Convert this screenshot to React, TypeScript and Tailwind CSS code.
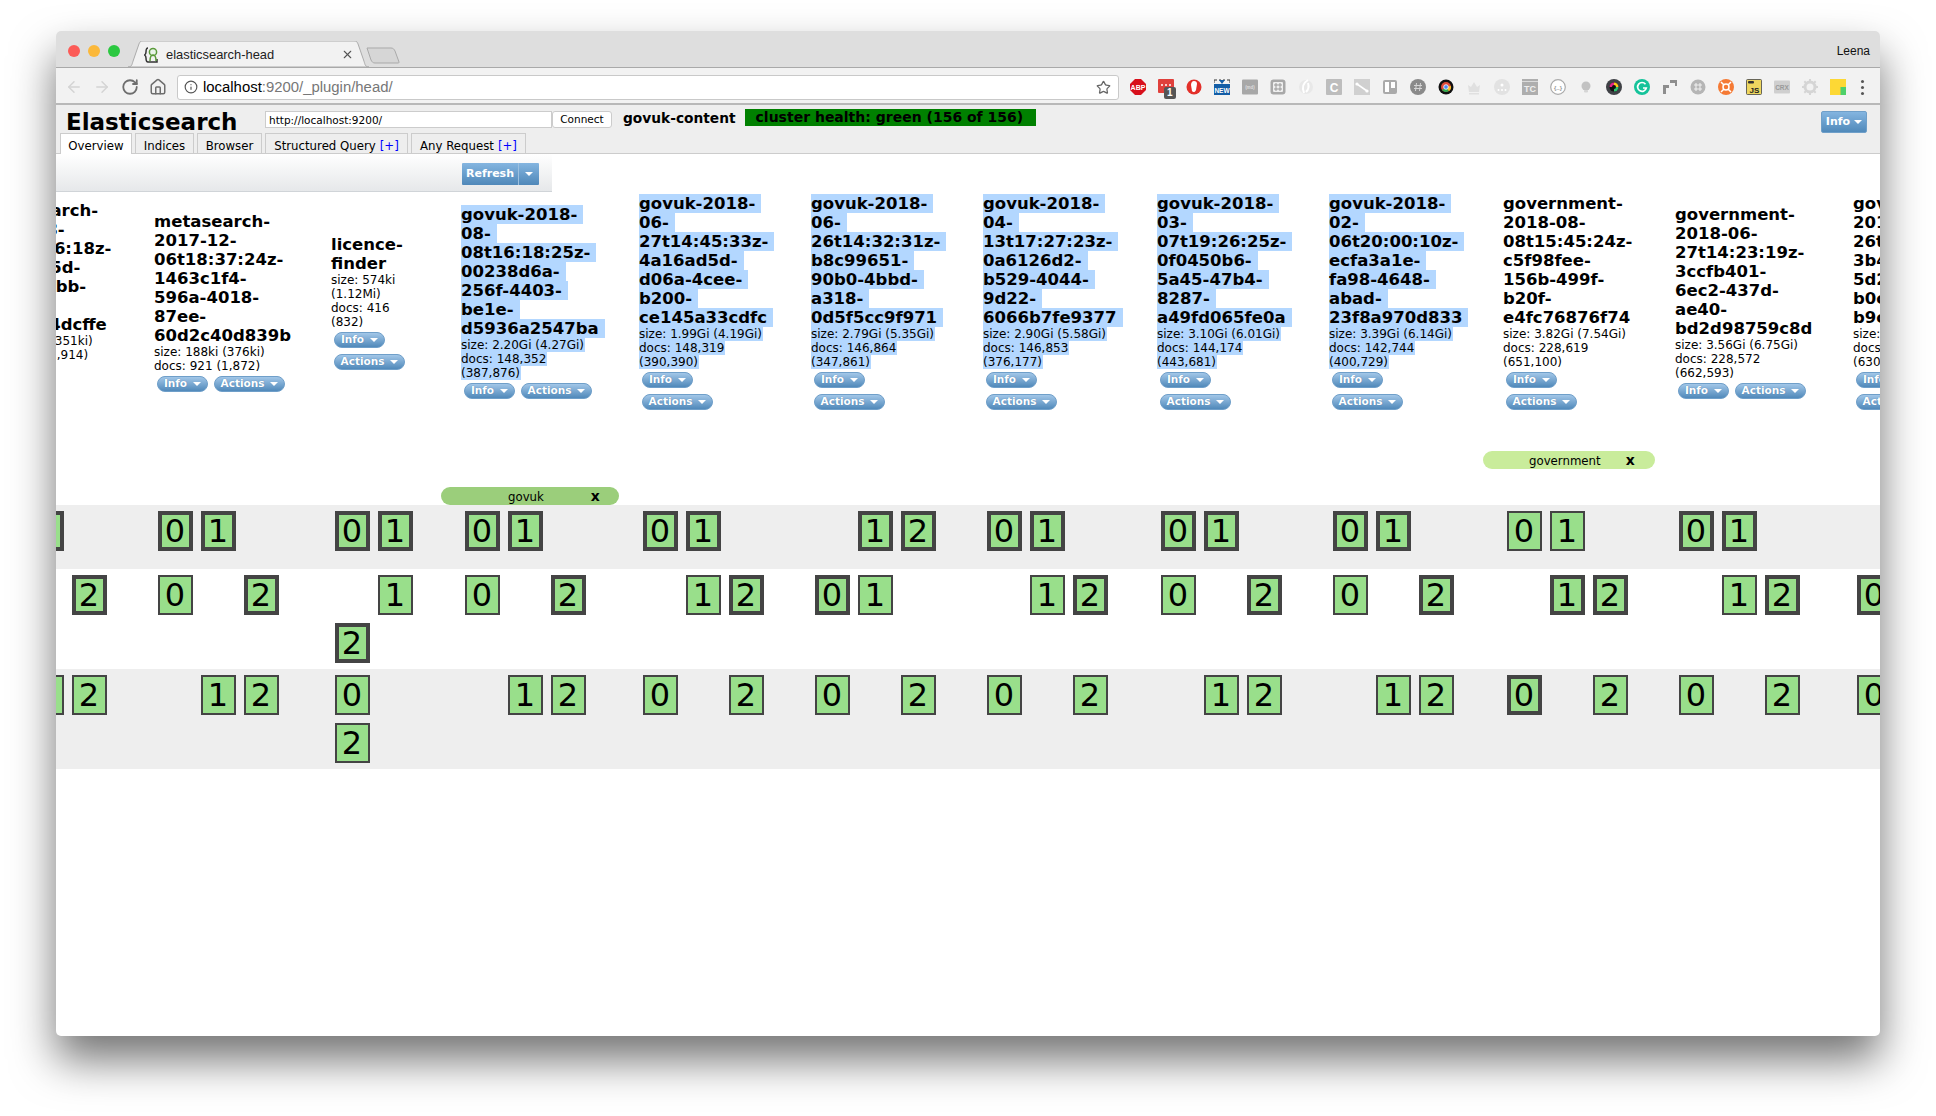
import React from 'react';
import { ArrowLeft, ArrowRight, RotateCw, House, Star, Info, X } from 'lucide-react';

type Col = {
    w: string;
    shardW: string;
    lines: string[];
    stats: string[];
    selected?: boolean;
    stacked?: boolean;
    shards: [string, string, string];
};

// T = primary (thick border), t = replica, - = empty slot
const columns: Col[] = [
    {
        w: 'w-[172px]', shardW: 'w-[125px]', stacked: true,
        lines: ['metasearch-', '2018-08-', '08t16:16:18z-', '4e19a75d-', '7c2a-90bb-', '8f1e-', '7ab1c34dcffe'],
        stats: ['size: 175ki (351ki)', 'docs: 957 (1,914)'],
        shards: ['-T-', '--T', '-tt'],
    },
    {
        w: 'w-[177px]', shardW: 'w-[125px]',
        lines: ['metasearch-', '2017-12-', '06t18:37:24z-', '1463c1f4-', '596a-4018-', '87ee-', '60d2c40d839b'],
        stats: ['size: 188ki (376ki)', 'docs: 921 (1,872)'],
        shards: ['TT-', 't-T', '-tt'],
    },
    {
        w: 'w-[130px]', shardW: 'w-[90px]', stacked: true,
        lines: ['licence-', 'finder'],
        stats: ['size: 574ki', '(1.12Mi)', 'docs: 416', '(832)'],
        shards: ['TT-', '-tT', 't-t'],
    },
    {
        w: 'w-[178px]', shardW: 'w-[125px]', selected: true,
        lines: ['govuk-2018-', '08-', '08t16:18:25z-', '00238d6a-', '256f-4403-', 'be1e-', 'd5936a2547ba'],
        stats: ['size: 2.20Gi (4.27Gi)', 'docs: 148,352', '(387,876)'],
        shards: ['TT-', 't-T', '-tt'],
    },
    {
        w: 'w-[172px]', shardW: 'w-[125px]', selected: true, stacked: true,
        lines: ['govuk-2018-', '06-', '27t14:45:33z-', '4a16ad5d-', 'd06a-4cee-', 'b200-', 'ce145a33cdfc'],
        stats: ['size: 1.99Gi (4.19Gi)', 'docs: 148,319', '(390,390)'],
        shards: ['TT-', '-tT', 't-t'],
    },
    {
        w: 'w-[172px]', shardW: 'w-[125px]', selected: true, stacked: true,
        lines: ['govuk-2018-', '06-', '26t14:32:31z-', 'b8c99651-', '90b0-4bbd-', 'a318-', '0d5f5cc9f971'],
        stats: ['size: 2.79Gi (5.35Gi)', 'docs: 146,864', '(347,861)'],
        shards: ['-TT', 'Tt-', 't-t'],
    },
    {
        w: 'w-[174px]', shardW: 'w-[125px]', selected: true, stacked: true,
        lines: ['govuk-2018-', '04-', '13t17:27:23z-', '0a6126d2-', 'b529-4044-', '9d22-', '6066b7fe9377'],
        stats: ['size: 2.90Gi (5.58Gi)', 'docs: 146,853', '(376,177)'],
        shards: ['TT-', '-tT', 't-t'],
    },
    {
        w: 'w-[172px]', shardW: 'w-[125px]', selected: true, stacked: true,
        lines: ['govuk-2018-', '03-', '07t19:26:25z-', '0f0450b6-', '5a45-47b4-', '8287-', 'a49fd065fe0a'],
        stats: ['size: 3.10Gi (6.01Gi)', 'docs: 144,174', '(443,681)'],
        shards: ['TT-', 't-T', '-tt'],
    },
    {
        w: 'w-[174px]', shardW: 'w-[125px]', selected: true, stacked: true,
        lines: ['govuk-2018-', '02-', '06t20:00:10z-', 'ecfa3a1e-', 'fa98-4648-', 'abad-', '23f8a970d833'],
        stats: ['size: 3.39Gi (6.14Gi)', 'docs: 142,744', '(400,729)'],
        shards: ['TT-', 't-T', '-tt'],
    },
    {
        w: 'w-[172px]', shardW: 'w-[125px]', stacked: true,
        lines: ['government-', '2018-08-', '08t15:45:24z-', 'c5f98fee-', '156b-499f-', 'b20f-', 'e4fc76876f74'],
        stats: ['size: 3.82Gi (7.54Gi)', 'docs: 228,619', '(651,100)'],
        shards: ['tt-', '-TT', 'T-t'],
    },
    {
        w: 'w-[178px]', shardW: 'w-[125px]',
        lines: ['government-', '2018-06-', '27t14:23:19z-', '3ccfb401-', '6ec2-437d-', 'ae40-', 'bd2d98759c8d'],
        stats: ['size: 3.56Gi (6.75Gi)', 'docs: 228,572', '(662,593)'],
        shards: ['TT-', '-tT', 't-t'],
    },
    {
        w: 'w-[172px]', shardW: 'w-[125px]', stacked: true,
        lines: ['government-', '2018-06-', '26t14:10:05z-', '3b4a19c2-', '5d2e-41f7-', 'b0c3-', 'b9c71ad4e602'],
        stats: ['size: 3.60Gi (7.02Gi)', 'docs: 228,101', '(630,512)'],
        shards: ['-TT', 'T--', 't--'],
    },
];

function Caret() {
    return <span className="inline-block h-0 w-0 border-x-[4px] border-t-[4px] border-x-transparent border-t-white" />;
}

function PillButton({ label, width }: { label: string; width: string }) {
    return (
        <div className={`flex h-[16px] items-center justify-center gap-[6px] rounded-full border border-[#6f9fc9] bg-gradient-to-b from-[#a2c7e8] to-[#5089ba] text-[10.5px] font-bold text-white [text-shadow:0_0_1px_#3f75a5] ${width}`}>
            {label}
            <Caret />
        </div>
    );
}

function IndexHeader({ col }: { col: Col }) {
    const mark = col.selected ? 'bg-[#b3d7ff] pr-[6px]' : '';
    return (
        <div className="flex flex-col">
            <div className="text-[16.5px] leading-[19px] font-bold whitespace-nowrap text-black">
                {col.lines.map((line) => (
                    <div key={line}><span className={mark}>{line}</span></div>
                ))}
            </div>
            <div className="text-[12px] leading-[14px] whitespace-nowrap text-black">
                {col.stats.map((line) => (
                    <div key={line}><span className={col.selected ? 'bg-[#b3d7ff] pr-[1px]' : ''}>{line}</span></div>
                ))}
            </div>
            <div className={col.stacked ? 'mt-[3px] ml-[3px] flex flex-col gap-[6px]' : 'mt-[3px] ml-[3px] flex gap-[6px]'}>
                <PillButton label="Info" width="w-[51px]" />
                <PillButton label="Actions" width="w-[71px]" />
            </div>
        </div>
    );
}

function Shard({ n, kind }: { n: number; kind: string }) {
    if (kind === '-') return <div className="h-[40px] w-[35px]" />;
    return (
        <div className={`flex h-[40px] w-[35px] items-center justify-center border-[#444] bg-[#99df8b] pr-[1px] text-[32px] leading-none text-black ${kind === 'T' ? 'border-[4px]' : 'border-2'}`}>
            {n}
        </div>
    );
}

function ExtIcon({ children }: { children: React.ReactNode }) {
    return (
        <svg viewBox="0 0 16 16" className="h-[16px] w-[16px]">
            {children}
        </svg>
    );
}

const iconText = 'font-["Liberation_Sans"] font-bold';

const extensions: React.ReactNode[] = [
    <><path d="M5 0h6l5 5v6l-5 5H5l-5-5V5z" fill="#d8101c" /><text x="8" y="10.5" textAnchor="middle" fontSize="7" fill="#fff" className={iconText}>ABP</text></>,
    <><rect width="16" height="14" rx="1" fill="#e0403c" /><circle cx="4" cy="6" r="1" fill="#fff" /><circle cx="8" cy="6" r="1" fill="#fff" /><circle cx="12" cy="6" r="1" fill="#fff" /></>,
    <><circle cx="8" cy="8" r="7.5" fill="#e3302a" /><path d="M5 6c0-2 1-4 3-4s3 1 3 3l-1 6c-.5 2-3 3-4 1z" fill="#fff" /></>,
    <><rect y="5" width="16" height="11" fill="#135da6" /><path d="M0 1h3M5 1h2M9 1h2M13 1h3M0 1v3M16 1v3" stroke="#333" strokeWidth="1" /><path d="M5 1l3 4 3-4z" fill="#135da6" /><text x="8" y="14" textAnchor="middle" fontSize="6.5" fill="#fff" className={iconText}>NEW</text></>,
    <><rect width="16" height="15" y="0.5" rx="1" fill="#a8a8a8" /><text x="8" y="10" textAnchor="middle" fontSize="4.5" fill="#ddd" className={iconText}>(md)</text></>,
    <><rect width="15" height="15" x="0.5" y="0.5" rx="3" fill="#a8a8a8" /><rect x="3" y="3" width="10" height="10" rx="1" fill="#eee" /><path d="M6 4v8M10 4v8M4 6h8M4 10h8" stroke="#999" strokeWidth="1" /></>,
    <><circle cx="8" cy="8" r="7" fill="#e8e8e8" /><path d="M10 1c-5 3-6 8-4 13M10 4c1 3 1 6-2 9" stroke="#fff" strokeWidth="2" fill="none" /></>,
    <><rect width="16" height="16" rx="1" fill="#bdbdbd" /><text x="8" y="12.5" textAnchor="middle" fontSize="12" fill="#fff" className={iconText}>C</text></>,
    <><rect width="16" height="16" fill="#d0d0d0" /><path d="M3 5l10 7" stroke="#fff" strokeWidth="1.6" /><circle cx="3" cy="5" r="1.6" fill="#fff" /><circle cx="13" cy="12" r="1.6" fill="#fff" /></>,
    <><rect x="1" y="1" width="14" height="14" rx="2" fill="#aaa" /><rect x="3" y="3" width="4" height="10" fill="#fff" /><rect x="9" y="3" width="4" height="6" fill="#fff" /></>,
    <><circle cx="8" cy="8" r="8" fill="#8a8a8a" /><path d="M6.5 4l-1 8M10.5 4l-1 8M4 6.5h8M4 9.5h8" stroke="#d5d5d5" strokeWidth="1" /></>,
    <><circle cx="8" cy="8" r="7.5" fill="#111" /><circle cx="8" cy="8" r="5" fill="#dd4b39" /><path d="M8 8l-4 3a5 5 0 0 0 7 1z" fill="#2da94f" /><path d="M8 8l5-1a5 5 0 0 1-2 5z" fill="#f6c026" /><circle cx="8" cy="8" r="2.3" fill="#4a8af4" stroke="#fff" strokeWidth="0.8" /></>,
    <path d="M2 6l3 2 3-5 3 5 3-2-1 7H3zM3 14h10v1.5H3z" fill="#e0e0e0" />,
    <><circle cx="8" cy="8" r="8" fill="#e2e2e2" /><circle cx="8" cy="6" r="1.5" fill="#fff" /><circle cx="4.5" cy="11" r="1" fill="#fff" /><circle cx="8" cy="11" r="1" fill="#fff" /><circle cx="11.5" cy="11" r="1" fill="#fff" /></>,
    <><rect width="16" height="16" fill="#aeaeae" /><path d="M0 2.5h16" stroke="#e6e6e6" strokeWidth="0.8" /><text x="8" y="13" textAnchor="middle" fontSize="9" fill="#eee" className={iconText}>TC</text></>,
    <><circle cx="8" cy="8" r="7.3" fill="#fff" stroke="#aaa" strokeWidth="1.2" /><text x="8" y="10.5" textAnchor="middle" fontSize="6" fill="#999" className={iconText}>{'{..}'}</text></>,
    <><circle cx="8" cy="7" r="4.5" fill="#c2c2c2" /><rect x="6" y="11" width="4" height="2.5" rx="1" fill="#d5d5d5" /></>,
    <><circle cx="8" cy="8" r="8" fill="#3f4146" /><circle cx="8" cy="8" r="4.5" fill="#111" /><path d="M8 3.5a4.5 4.5 0 0 1 4.5 4.5H8z" fill="#ffc61a" /><path d="M3.5 8A4.5 4.5 0 0 1 8 3.5V8z" fill="#e0248a" /><path d="M12.5 8A4.5 4.5 0 0 1 8 12.5V8z" fill="#29c46e" /><circle cx="8" cy="8" r="2" fill="#111" /></>,
    <><circle cx="8" cy="8" r="8" fill="#15c39a" /><path d="M11.5 5.2A4.4 4.4 0 1 0 12.3 9H9" stroke="#fff" strokeWidth="1.7" fill="none" /></>,
    <path d="M8 1h7v6h-2V4H8zM1 6h6v3H4v6H1z" fill="#8e8e8e" />,
    <><circle cx="8" cy="8" r="7.5" fill="#b5b5b5" /><path d="M6 4v8M10 4v8M4 6h8M4 10h8" stroke="#eee" strokeWidth="1.1" /></>,
    <><circle cx="8" cy="8" r="8" fill="#f57a34" /><circle cx="8" cy="8" r="3" fill="none" stroke="#fff" strokeWidth="1.5" /><path d="M3 3l3 3M13 3l-3 3M3 13l3-3M13 13l-3-3" stroke="#fff" strokeWidth="1.5" /></>,
    <><rect x="0.5" y="0.5" width="15" height="15" rx="1" fill="#eed75f" stroke="#444" strokeWidth="0.8" /><rect x="2" y="2" width="6" height="2.5" rx="1" fill="#333" /><text x="8.5" y="14" textAnchor="middle" fontSize="8" fill="#222" className={iconText}>JS</text></>,
    <><rect width="16" height="13" y="1.5" rx="1" fill="#cfcfcf" /><text x="8" y="11" textAnchor="middle" fontSize="6.5" fill="#9a9a9a" className={iconText}>CRX</text></>,
    <><circle cx="8" cy="8" r="5" fill="none" stroke="#d5d5d5" strokeWidth="3" /><path d="M8 0v3M8 13v3M0 8h3M13 8h3M2.3 2.3l2 2M11.7 11.7l2 2M2.3 13.7l2-2M11.7 4.3l2-2" stroke="#d5d5d5" strokeWidth="2" /></>,
    <><rect width="16" height="16" fill="#fdd835" /><rect x="10.5" y="8" width="5.5" height="8" fill="#4ed06a" /></>,
];

export default function App() {
    return (
        <div className="h-[1116px] w-[1936px] overflow-hidden bg-white pt-[31px] pl-[56px] font-['DejaVu_Sans',sans-serif]">
            <div className="flex h-[1005px] w-[1824px] flex-col overflow-hidden rounded-[5px] bg-white shadow-[0_24px_44px_rgba(0,0,0,0.55)]">
                {/* Tab strip */}
                <div className="flex h-[37px] items-end border-b border-[#a9a9a9] bg-[#dedede] font-['Liberation_Sans',sans-serif]">
                    <div className="mb-[10px] ml-[12px] flex gap-[8px] self-end">
                        <span className="h-[12px] w-[12px] rounded-full bg-[#fc5b57]" />
                        <span className="h-[12px] w-[12px] rounded-full bg-[#fbb83a]" />
                        <span className="h-[12px] w-[12px] rounded-full bg-[#2bc840]" />
                    </div>
                    <div className="relative ml-[8px] flex h-[26px] w-[241px] items-center pt-[1px] pr-[15px] pl-[16px]">
                        <svg viewBox="0 0 241 27" preserveAspectRatio="none" className="absolute inset-0 h-[26px] w-[241px]">
                            <path d="M0 27 C4 27 4 24 5 21 L11 3 C12 1 12 0 15 0 L226 0 C229 0 229 1 230 3 L236 21 C237 24 237 27 241 27 Z" fill="#f2f2f2" stroke="#a9a9a9" />
                        </svg>
                        <svg viewBox="0 0 16 16" className="relative h-[16px] w-[16px]">
                            <path d="M4 1C2 1 2 3 2 5S2 7 .6 8C2 9 2 9 2 11s0 4 2 4h9v-3" fill="none" stroke="#333" strokeWidth="1.5" />
                            <circle cx="9" cy="5" r="3.6" fill="#e8f4e8" stroke="#5a9a3a" strokeWidth="1.5" />
                            <path d="M6 14c0-4 1-6 3-6s3 2 3 6" fill="none" stroke="#5a9a3a" strokeWidth="1.5" />
                        </svg>
                        <span className="relative ml-[6px] text-[12.9px] text-[#222]">elasticsearch-head</span>
                        <X className="relative ml-auto h-[13px] w-[13px] text-[#555]" strokeWidth={2} />
                    </div>
                    <svg viewBox="0 0 34 17" className="mb-[3px] -ml-[3px] h-[17px] w-[34px]">
                        <path d="M1 1h24c2 0 3 1 4 3l4 11c0 1 0 1-2 1H9c-2 0-3-1-4-3z" fill="#d6d6d6" stroke="#a9a9a9" />
                    </svg>
                    <span className="mb-[7px] ml-auto pr-[10px] text-[12px] text-[#111]">Leena</span>
                </div>

                {/* Toolbar */}
                <div className="flex h-[37px] items-center border-b-2 border-[#b8b8b8] bg-[#f2f2f2] pt-[3px] font-['Liberation_Sans',sans-serif]">
                    <div className="ml-[9px] flex items-center gap-[10px]">
                        <ArrowLeft className="h-[18px] w-[18px] text-[#d4d4d4]" strokeWidth={2} />
                        <ArrowRight className="h-[18px] w-[18px] text-[#d4d4d4]" strokeWidth={2} />
                        <RotateCw className="h-[18px] w-[18px] text-[#6e6e6e]" strokeWidth={2.4} />
                        <House className="h-[18px] w-[18px] text-[#6e6e6e]" strokeWidth={2} />
                    </div>
                    <div className="ml-[10px] flex h-[25px] w-[942px] items-center rounded-[3px] border border-[#c9c9c9] bg-white pr-[7px] pl-[6px]">
                        <Info className="h-[14px] w-[14px] text-[#555]" strokeWidth={2} />
                        <span className="ml-[5px] text-[14.9px] text-black">
                            localhost<span className="text-[#777]">:9200/_plugin/head/</span>
                        </span>
                        <Star className="ml-auto h-[15px] w-[15px] text-[#666]" strokeWidth={2} />
                    </div>
                    <div className="ml-[5px] flex items-center">
                        {extensions.map((icon, i) => (
                            <div key={i} className="relative flex w-[28px] justify-center">
                                <ExtIcon>{icon}</ExtIcon>
                                {i === 1 && (
                                    <span className="absolute top-[8px] left-[12px] rounded-[2px] bg-[#555] px-[3px] text-[10px] leading-[12px] font-bold text-white">1</span>
                                )}
                            </div>
                        ))}
                        <div className="flex w-[20px] flex-col items-center gap-[3px]">
                            <span className="h-[3px] w-[3px] rounded-full bg-[#555]" />
                            <span className="h-[3px] w-[3px] rounded-full bg-[#555]" />
                            <span className="h-[3px] w-[3px] rounded-full bg-[#555]" />
                        </div>
                    </div>
                </div>

                {/* elasticsearch-head header */}
                <div className="flex h-[49px] flex-col border-b border-[#ccc] bg-[#eee]">
                    <div className="flex h-[28px] items-start pr-[13px]">
                        <div className="mt-[3px] ml-[10px] w-[199px] text-[23px] leading-[28px] font-bold text-black">Elasticsearch</div>
                        <input
                            readOnly
                            value="http://localhost:9200/"
                            className="mt-[6px] h-[17px] w-[287px] border border-[#ccc] bg-white px-[3px] text-[10.5px] text-black outline-none"
                        />
                        <button className="mt-[6px] h-[17px] w-[60px] rounded-[3px] border border-[#ccc] bg-white text-[10.5px] leading-none text-black">Connect</button>
                        <span className="mt-[4px] ml-[11px] text-[13.75px] leading-[18px] font-bold text-black">govuk-content</span>
                        <span className="mt-[4px] ml-[9px] flex h-[17px] w-[291px] items-center bg-[#008000] pl-[11px] text-[14px] font-bold text-black">cluster health: green (156 of 156)</span>
                        <div className="mt-[6px] ml-auto flex h-[22px] w-[46px] items-center justify-center gap-[4px] rounded-[2px] border border-[#6f9fc9] bg-gradient-to-b from-[#84b5e0] to-[#5089ba] text-[11px] font-bold text-white">
                            Info
                            <Caret />
                        </div>
                    </div>
                    <div className="flex h-[20px] gap-[3px] pl-[4px] text-[11.75px] text-black">
                        <div className="-mb-px flex h-[21px] w-[72px] items-center justify-center border border-b-0 border-[#ccc] bg-white pt-[6px]">Overview</div>
                        <div className="flex w-[59px] items-center justify-center border border-b-0 border-[#ccc] pt-[6px]">Indices</div>
                        <div className="flex w-[65px] items-center justify-center border border-b-0 border-[#ccc] pt-[6px]">Browser</div>
                        <div className="flex w-[143px] items-center justify-center gap-[4px] border border-b-0 border-[#ccc] pt-[6px]">Structured Query <span className="text-[#00f]">[+]</span></div>
                        <div className="flex w-[115px] items-center justify-center gap-[4px] border border-b-0 border-[#ccc] pt-[6px]">Any Request <span className="text-[#00f]">[+]</span></div>
                    </div>
                </div>

                {/* Refresh bar */}
                <div className="flex h-[38px] w-[496px] items-start justify-end border-b border-[#d0d4d8] bg-gradient-to-b from-white to-[#e6e8ea] pt-[9px] pr-[13px]">
                    <div className="flex h-[22px] w-[77px] rounded-[1px] bg-gradient-to-b from-[#84b5e0] to-[#4f88b9] text-[11px] font-bold text-white">
                        <div className="flex w-[57px] items-center justify-center border-r border-[#9cc0df]">Refresh</div>
                        <div className="flex flex-1 items-center justify-center"><Caret /></div>
                    </div>
                </div>

                {/* Cluster overview table, scrolled sideways */}
                <div className="flex-1 overflow-hidden">
                    <table className="-ml-[74px] w-[2043px] table-fixed border-collapse">
                        <colgroup>
                            {columns.map((col, i) => <col key={i} className={col.w} />)}
                        </colgroup>
                        <tbody>
                            <tr className="h-[220px]">
                                {columns.map((col, i) => (
                                    <td key={i} className="p-0 align-middle">
                                        <IndexHeader col={col} />
                                    </td>
                                ))}
                            </tr>
                            <tr className="h-[39px]"><td colSpan={12} className="p-0" /></tr>
                            <tr className="h-[18px]">
                                <td colSpan={9} className="p-0" />
                                <td colSpan={3} className="p-0 align-top">
                                    <div className="-ml-[20px] flex h-[18px] w-[172px] items-center rounded-[9px] bg-[#c9ec9b] text-[11.75px] text-black">
                                        <span className="mt-[4px] ml-[46px]">government</span>
                                        <span className="ml-[25px] text-[14px] leading-none font-bold">x</span>
                                    </div>
                                </td>
                            </tr>
                            <tr className="h-[18px]"><td colSpan={12} className="p-0" /></tr>
                            <tr className="h-[18px]">
                                <td colSpan={3} className="p-0" />
                                <td colSpan={9} className="p-0 align-top">
                                    <div className="-ml-[20px] flex h-[18px] w-[178px] items-center rounded-[9px] bg-[#9bce7b] text-[11.75px] text-black">
                                        <span className="mt-[4px] ml-[67px]">govuk</span>
                                        <span className="ml-[47px] text-[14px] leading-none font-bold">x</span>
                                    </div>
                                </td>
                            </tr>
                            {[0, 1, 2].map((row) => (
                                <tr key={row} className={row === 1 ? 'h-[100px] bg-white' : row === 0 ? 'h-[64px] bg-[#eee]' : 'h-[100px] bg-[#eee]'}>
                                    {columns.map((col, i) => (
                                        <td key={i} className="p-0 pt-[6px] align-top">
                                            <div className={`ml-[4px] flex flex-wrap gap-[8px] ${col.shardW}`}>
                                                {col.shards[row].replace(/-+$/, '').split('').map((kind, n) => (
                                                    <Shard key={n} n={n} kind={kind} />
                                                ))}
                                            </div>
                                        </td>
                                    ))}
                                </tr>
                            ))}
                        </tbody>
                    </table>
                </div>
            </div>
        </div>
    );
}
